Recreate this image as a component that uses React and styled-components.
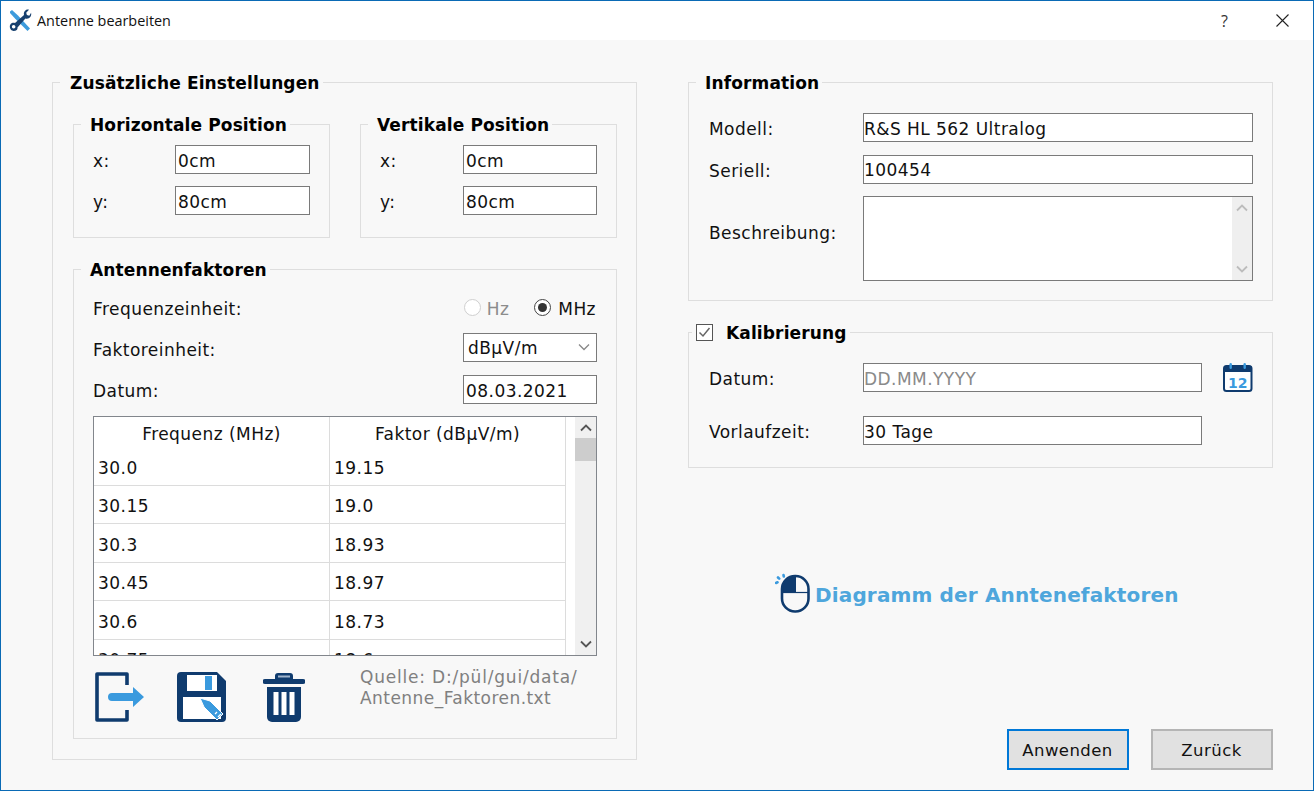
import React from 'react';
import styled, { createGlobalStyle } from 'styled-components';

const NAVY = '#0f3b6e';
const SKY = '#3a9ade';

const rows = [
  ['30.0', '19.15'],
  ['30.15', '19.0'],
  ['30.3', '18.93'],
  ['30.45', '18.97'],
  ['30.6', '18.73'],
  ['30.75', '18.6'],
];

const Global = createGlobalStyle`
  html, body { margin: 0; padding: 0; background: #f7f7f7; }
  * { box-sizing: border-box; }
  body {
    font-family: "DejaVu Sans", Verdana, sans-serif;
    font-size: 17px;
    letter-spacing: 0.45px;
    color: #111;
  }
`;

const Window = styled.div`
  width: 1314px;
  height: 791px;
  border: 1px solid #0a6ab5;
  background: #f8f8f8;
  display: flex;
  flex-direction: column;
  overflow: hidden;
`;

const TitleBar = styled.div`
  height: 39px;
  flex: none;
  background: #fff;
  display: flex;
  align-items: center;
  padding: 0 24px 0 8px;
`;

const Title = styled.span`
  font-family: "Open Sans", "Noto Sans", sans-serif;
  font-size: 14.4px;
  letter-spacing: 0;
  margin-left: 5px;
  flex: 1;
`;

const Help = styled.span`
  font-family: "Open Sans", sans-serif;
  font-size: 16px;
  letter-spacing: 0;
  color: #333;
  margin-right: 48px;
`;

const Content = styled.div`
  flex: 1;
  display: flex;
  gap: 51px;
  padding: 32px 40px 20px 51px;
`;

const Group = styled.fieldset`
  margin: 0;
  min-width: 0;
  border: 1px solid #dedede;
  padding: ${(p) => p.$pad};
`;

const Legend = styled.legend`
  font-weight: 700;
  font-size: 17px;
  letter-spacing: 0.13px;
  line-height: 22px;
  height: 20px;
  margin-left: ${(p) => p.$ml}px;
  padding: 0 3px 0 ${(p) => p.$pl || 9}px;
  white-space: nowrap;
  color: #000;
`;

const CheckLegend = styled(Legend)`
  display: flex;
  align-items: center;
  gap: 13px;
  padding-left: 4px;
`;

const LegendText = styled.span`
  padding-top: 2px;
`;

const CheckBox = styled.span`
  width: 17px;
  height: 17px;
  border: 1.5px solid #555;
  display: flex;
  align-items: center;
  justify-content: center;
  background: #fff;
`;

const LeftColumn = styled.div`
  width: 585px;
  margin-bottom: 10px;
`;

const RightColumn = styled.div`
  width: 585px;
  display: flex;
  flex-direction: column;
`;

const PositionRow = styled.div`
  display: flex;
  gap: 30px;
`;

const PositionGroup = styled(Group)`
  width: 257px;
`;

const Stack = styled.div`
  display: flex;
  flex-direction: column;
  gap: ${(p) => p.$gap}px;
`;

const Row = styled.div`
  display: flex;
  align-items: center;
  height: ${(p) => p.$h || 29}px;
  justify-content: ${(p) => (p.$between ? 'space-between' : 'flex-start')};
`;

const Label = styled.span`
  width: ${(p) => p.$w}px;
  flex: none;
  white-space: nowrap;
  padding-top: 3px;
  padding-bottom: ${(p) => p.$raise || 0}px;
`;

const Field = styled.input`
  width: ${(p) => p.$w}px;
  height: 29px;
  flex: none;
  border: 1px solid #7a7a7a;
  background: #fff;
  padding: 2px 2px 0 ${(p) => (p.$flush ? 0 : 2)}px;
  font: inherit;
  letter-spacing: inherit;
  color: #111;
  outline: none;
  &::placeholder { color: #8a8a8a; opacity: 1; }
`;

const AntennaGroup = styled(Group)`
  margin-top: 21px;
`;

const RadioSet = styled.div`
  display: flex;
  align-items: center;
  margin-right: 1px;
`;

const Radio = styled.span`
  width: 17px;
  height: 17px;
  border-radius: 50%;
  background: #fff;
  border: 1.5px solid ${(p) => (p.$on ? '#444' : '#cfcfcf')};
  display: flex;
  align-items: center;
  justify-content: center;
  &::after {
    content: '';
    width: 9px;
    height: 9px;
    border-radius: 50%;
    background: ${(p) => (p.$on ? '#333' : 'transparent')};
  }
`;

const RadioText = styled.span`
  margin-left: ${(p) => (p.$off ? 6 : 7)}px;
  margin-right: ${(p) => p.$mr || 0}px;
  padding-top: 3px;
  color: ${(p) => (p.$off ? '#8c8c8c' : '#111')};
`;

const Combo = styled.div`
  width: 134px;
  height: 29px;
  align-self: flex-start;
  border: 1px solid #7a7a7a;
  background: #fff;
  display: flex;
  align-items: center;
  justify-content: space-between;
  padding: 0 5px 0 4px;
`;

const TableFrame = styled.div`
  margin-top: 12px;
  height: 240px;
  border: 1px solid #82868c;
  background: #fff;
  display: flex;
  overflow: hidden;
`;

const TableArea = styled.div`
  width: 472px;
  flex: none;
  overflow: hidden;
`;

const TableRow = styled.div`
  display: grid;
  grid-template-columns: 236px 1fr;
  height: ${(p) => (p.$head ? 30 : 38.5)}px;
  border-bottom: ${(p) => (p.$head ? 'none' : '1px solid #dcdcdc')};
`;

const Cell = styled.div`
  display: flex;
  align-items: center;
  padding: 4px 0 0 4px;
  border-right: 1px solid #dcdcdc;
`;

const HeadCell = styled(Cell)`
  justify-content: center;
  padding: 4px 0 0;
`;

const Gutter = styled.div`
  width: 9px;
  flex: none;
`;

const Scrollbar = styled.div`
  width: ${(p) => p.$w || 21}px;
  flex: none;
  background: ${(p) => (p.$light ? '#efefef' : '#f0f0f0')};
  display: flex;
  flex-direction: column;
  align-items: center;
  justify-content: space-between;
  padding: 6px 0;
  position: relative;
`;

const Thumb = styled.div`
  position: absolute;
  top: 21px;
  left: 0;
  right: 0;
  height: 23px;
  background: #cdcdcd;
`;

const Footer = styled.div`
  display: flex;
  margin-top: 16px;
  height: 50px;
`;

const IconSlot = styled.div`
  width: ${(p) => p.$w}px;
  flex: none;
  margin-left: ${(p) => p.$ml || 0}px;
`;

const Source = styled.div`
  color: #808080;
  line-height: 21px;
  white-space: nowrap;
  margin-top: -5px;
  &::first-line { letter-spacing: 0.8px; }
`;

const NoteBox = styled.div`
  width: 390px;
  height: 85px;
  border: 1px solid #7a7a7a;
  background: #fff;
  display: flex;
  justify-content: flex-end;
`;

const CalibrationGroup = styled(Group)`
  margin-top: 21px;
`;

const CalendarWrap = styled.div`
  margin-left: 21px;
  width: 30px;
  height: 29px;
  display: flex;
`;

const DiagramLink = styled.div`
  margin: 105px 0 0 87px;
  display: flex;
  align-items: center;
  gap: 5px;
  height: 40px;
  color: #4ea6dc;
  font-weight: 700;
  font-size: 20px;
  letter-spacing: 0.15px;
`;

const DiagramText = styled.span`
  padding-top: 3px;
`;

const ButtonRow = styled.div`
  margin-top: auto;
  display: flex;
  justify-content: flex-end;
  gap: 22px;
`;

const Button = styled.button`
  width: 122px;
  height: 41px;
  background: #e1e1e1;
  border: ${(p) => (p.$primary ? '2px solid #0078d7' : '2px solid #b5b5b5')};
  font: inherit;
  font-size: 16.5px;
  letter-spacing: inherit;
  color: #111;
  padding: 2px 1px 0 0;
`;

const Chevron = ({ up, color = '#555', weight = 1.8 }) => (
  <svg width="14" height="9" viewBox="0 0 14 9" fill="none">
    <path d={up ? 'M2 7.5 7 2.5l5 5' : 'M2 1.500l5 5 5-5'} stroke={color} strokeWidth={weight} />
  </svg>
);

const ToolsIcon = () => (
  <svg width="23" height="23" viewBox="0 0 23 23">
    <path d="M1 2.500 3 1l6 5.500 12 13-2.500 2.500L6 9.500 1 4z" fill="#3d9bdc" />
    <path d="M4.500 22a4.300 4.300 0 0 1-1.500-8c1.200-.5 2.300-.3 3 .1L15 6c-.5-2 .1-3.800 2-5 1-.6 2-.6 3-.3L17.200 3.800l.7 2.300 2.400.6 1.800-3c.5 2.500-.3 4.500-2.300 5.500-1.200.6-2.400.5-3.400.2L8.500 18.500c.3 2-1 3.500-4 3.500zm.2-2.400a1.800 1.800 0 1 0-.1-3.600 1.800 1.800 0 0 0 .1 3.600z" fill="#17406f" />
  </svg>
);

const CloseIcon = () => (
  <svg width="13" height="13" viewBox="0 0 13 13" stroke="#222" strokeWidth="1.100">
    <path d="M.5.5l12 12M12.500.5l-12 12" />
  </svg>
);

const CheckMark = () => (
  <svg width="13" height="11" viewBox="0 0 13 11" fill="none" stroke="#666" strokeWidth="1.500">
    <path d="M1.500 5.500l3.500 3.500 6.500-8" />
  </svg>
);

const ExitIcon = () => (
  <svg width="50" height="50" viewBox="0 0 50 50">
    <path d="M32 13V2H2v46h30V38" fill="none" stroke={NAVY} strokeWidth="3.600" strokeLinejoin="round" />
    <path d="M17 21h21v-6l11 10-11 10v-6H17a4 4 0 0 1 0-8z" fill={SKY} />
  </svg>
);

const SaveIcon = () => (
  <svg width="50" height="50" viewBox="0 0 50 50">
    <path d="M4 0h36l9 9v37a4 4 0 0 1-4 4H4a4 4 0 0 1-4-4V4a4 4 0 0 1 4-4z" fill={NAVY} />
    <rect x="10" y="3" width="30" height="16" fill="#fff" />
    <rect x="28" y="4" width="7" height="14" fill={SKY} />
    <rect x="6" y="25" width="38" height="22" fill="#fff" />
    <path d="M23 26l10 3 13 13-6 6-13-13z" fill={SKY} stroke="#fff" strokeWidth="1" />
    <path d="M38 42l2-2M41 45l3-3" stroke="#fff" strokeWidth="1.300" />
  </svg>
);

const TrashIcon = () => (
  <svg width="42" height="50" viewBox="0 0 42 50">
    <path d="M12 7V4a3 3 0 0 1 3-3h12a3 3 0 0 1 3 3v3h10a2.500 2.500 0 0 1 0 5H2a2.500 2.500 0 0 1 0-5z" fill={NAVY} />
    <rect x="15" y="3.500" width="12" height="2" fill="#9fb4cc" />
    <path d="M4 15h34v30a5 5 0 0 1-5 5H9a5 5 0 0 1-5-5z" fill={NAVY} />
    <rect x="10.500" y="20" width="5" height="23" fill="#fff" />
    <rect x="18.500" y="20" width="5" height="23" fill="#fff" />
    <rect x="26.500" y="20" width="5" height="23" fill="#fff" />
  </svg>
);

const CalendarIcon = () => (
  <svg width="30" height="29" viewBox="0 0 30 29">
    <rect x="1" y="3" width="27.500" height="25" rx="2.500" fill="#fff" stroke={NAVY} strokeWidth="2" />
    <rect x="1" y="3" width="27.500" height="6" fill={NAVY} />
    <rect x="6.500" y="0" width="2.400" height="6" rx="1.200" fill={SKY} />
    <rect x="20.500" y="0" width="2.400" height="6" rx="1.200" fill={SKY} />
    <text x="14.800" y="24.500" textAnchor="middle" fontFamily="DejaVu Sans" fontWeight="700" fontSize="14" letterSpacing="0" fill={SKY}>12</text>
  </svg>
);

const MouseIcon = () => (
  <svg width="35" height="40" viewBox="0 0 35 40">
    <path d="M21 3a13 14 0 0 0-14 14v2h14z" fill={NAVY} />
    <rect x="7" y="3" width="26.500" height="35.500" rx="13" fill="none" stroke={NAVY} strokeWidth="2.600" />
    <path d="M7 19.500h26" stroke={NAVY} strokeWidth="1.200" />
    <g stroke={SKY} strokeWidth="2.600" strokeLinecap="round">
      <path d="M1 10l1.500-.7M3 4.500l1.200 1.200M8.500 2l.3 1.500" />
    </g>
  </svg>
);

export default function App() {
  return (
    <Window>
      <Global />
      <TitleBar>
        <ToolsIcon />
        <Title>Antenne bearbeiten</Title>
        <Help>?</Help>
        <CloseIcon />
      </TitleBar>
      <Content>
        <LeftColumn>
          <Group $pad="22px 19px 20px 20px">
            <Legend $ml={-13} $pl={10}>Zusätzliche Einstellungen</Legend>
            <PositionRow>
              <PositionGroup $pad="11px 20px 22px 19px">
                <Legend $ml={-12}>Horizontale Position</Legend>
                <Stack $gap={12}>
                  <Row><Label $w={82}>x:</Label><Field $w={135} readOnly value="0cm" /></Row>
                  <Row><Label $w={82}>y:</Label><Field $w={135} readOnly value="80cm" /></Row>
                </Stack>
              </PositionGroup>
              <PositionGroup $pad="11px 19px 22px 19px">
                <Legend $ml={-12}>Vertikale Position</Legend>
                <Stack $gap={12}>
                  <Row><Label $w={83}>x:</Label><Field $w={134} readOnly value="0cm" /></Row>
                  <Row><Label $w={83}>y:</Label><Field $w={134} readOnly value="80cm" /></Row>
                </Stack>
              </PositionGroup>
            </PositionRow>
            <AntennaGroup $pad="14px 19px 16px 19px">
              <Legend $ml={-12}>Antennenfaktoren</Legend>
              <Stack $gap={12}>
                <Row $between $h={28}>
                  <Label>Frequenzeinheit:</Label>
                  <RadioSet>
                    <Radio />
                    <RadioText $off $mr={25}>Hz</RadioText>
                    <Radio $on />
                    <RadioText>MHz</RadioText>
                  </RadioSet>
                </Row>
                <Row $between $h={30}>
                  <Label>Faktoreinheit:</Label>
                  <Combo>dBµV/m<Chevron color="#888" weight={1.3} /></Combo>
                </Row>
                <Row $between>
                  <Label>Datum:</Label>
                  <Field $w={134} readOnly value="08.03.2021" />
                </Row>
              </Stack>
              <TableFrame>
                <TableArea>
                  <TableRow $head>
                    <HeadCell>Frequenz (MHz)</HeadCell>
                    <HeadCell>Faktor (dBµV/m)</HeadCell>
                  </TableRow>
                  {rows.map(([freq, factor]) => (
                    <TableRow key={freq}>
                      <Cell>{freq}</Cell>
                      <Cell>{factor}</Cell>
                    </TableRow>
                  ))}
                </TableArea>
                <Gutter />
                <Scrollbar>
                  <Chevron up />
                  <Thumb />
                  <Chevron />
                </Scrollbar>
              </TableFrame>
              <Footer>
                <IconSlot $w={82} $ml={2}><ExitIcon /></IconSlot>
                <IconSlot $w={86}><SaveIcon /></IconSlot>
                <IconSlot $w={97}><TrashIcon /></IconSlot>
                <Source>Quelle: D:/pül/gui/data/<br />Antenne_Faktoren.txt</Source>
              </Footer>
            </AntennaGroup>
          </Group>
        </LeftColumn>
        <RightColumn>
          <Group $pad="21px 19px 19px 20px">
            <Legend $ml={-13}>Information</Legend>
            <Stack $gap={12.5}>
              <Row><Label $w={154}>Modell:</Label><Field $w={390} $flush readOnly value="R&S HL 562 Ultralog" /></Row>
              <Row><Label $w={154}>Seriell:</Label><Field $w={390} $flush readOnly value="100454" /></Row>
              <Row $h={85}>
                <Label $w={154} $raise={15}>Beschreibung:</Label>
                <NoteBox>
                  <Scrollbar $w={20} $light>
                    <Chevron up color="#bcbcbc" />
                    <Chevron color="#bcbcbc" />
                  </Scrollbar>
                </NoteBox>
              </Row>
            </Stack>
          </Group>
          <CalibrationGroup $pad="21px 19px 22px 20px">
            <CheckLegend $ml={-17}>
              <CheckBox><CheckMark /></CheckBox>
              <LegendText>Kalibrierung</LegendText>
            </CheckLegend>
            <Stack $gap={24}>
              <Row>
                <Label $w={154}>Datum:</Label>
                <Field $w={339} $flush readOnly placeholder="DD.MM.YYYY" />
                <CalendarWrap><CalendarIcon /></CalendarWrap>
              </Row>
              <Row><Label $w={154}>Vorlaufzeit:</Label><Field $w={339} $flush readOnly value="30 Tage" /></Row>
            </Stack>
          </CalibrationGroup>
          <DiagramLink><MouseIcon /><DiagramText>Diagramm der Anntenefaktoren</DiagramText></DiagramLink>
          <ButtonRow>
            <Button $primary>Anwenden</Button>
            <Button>Zurück</Button>
          </ButtonRow>
        </RightColumn>
      </Content>
    </Window>
  );
}
